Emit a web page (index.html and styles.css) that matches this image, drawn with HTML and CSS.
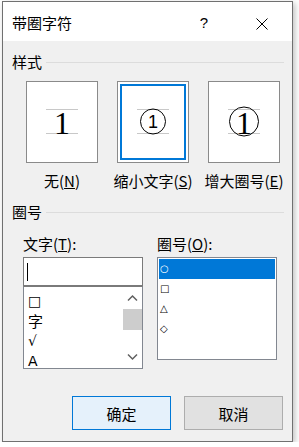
FILE: index.html
```html
<!DOCTYPE html>
<html lang="zh-CN">
  <head>
    <meta charset="UTF-8" />
    <title>带圈字符</title>
    <link rel="stylesheet" href="styles.css">
  </head>
  <body>
    <div class="window">
      <div class="titlebar">
        <span class="title">带圈字符</span>
        <span class="help">?</span>
        <svg class="close" width="12" height="12" viewBox="0 0 12 12">
          <path d="M0.5 0.5 L11.5 11.5 M11.5 0.5 L0.5 11.5" stroke="#000" stroke-width="1" fill="none" />
        </svg>
      </div>

      <div class="content">
        <div class="group-head"><span>样式</span><i class="rule"></i></div>

        <div class="styles">
          <div class="opt">
            <div class="box">
              <svg width="70" height="80" viewBox="0 0 70 80">
                <line x1="19" y1="27.5" x2="51" y2="27.5" class="guide" />
                <line x1="19" y1="51.5" x2="51" y2="51.5" class="guide" />
                <text x="35" y="51.5" class="big-one">1</text>
              </svg>
            </div>
            <span class="opt-label">无(<u>N</u>)</span>
          </div>

          <div class="opt">
            <div class="box picked">
              <div class="focus">
                <svg width="62" height="72" viewBox="4 4 62 72">
                  <line x1="19" y1="27.5" x2="51" y2="27.5" class="guide" />
                  <line x1="19" y1="51.5" x2="51" y2="51.5" class="guide" />
                  <circle cx="35" cy="39.5" r="12.5" class="ring" />
                  <text x="35" y="46" class="small-one">1</text>
                </svg>
              </div>
            </div>
            <span class="opt-label">缩小文字(<u>S</u>)</span>
          </div>

          <div class="opt">
            <div class="box">
              <svg width="70" height="80" viewBox="0 0 70 80">
                <line x1="19" y1="27.5" x2="51" y2="27.5" class="guide" />
                <line x1="19" y1="51.5" x2="51" y2="51.5" class="guide" />
                <circle cx="35" cy="39.5" r="14.5" class="ring" />
                <text x="35" y="51.5" class="big-one">1</text>
              </svg>
            </div>
            <span class="opt-label">增大圈号(<u>E</u>)</span>
          </div>
        </div>

        <div class="group-head second"><span>圈号</span><i class="rule"></i></div>

        <div class="pickers">
          <div class="col">
            <span class="field-label">文字(<u>T</u>):</span>
            <div class="input"><i class="caret"></i></div>
            <div class="textlist">
              <ul class="items">
                <li class="sym">□</li>
                <li>字</li>
                <li class="sym">√</li>
                <li class="sym">A</li>
              </ul>
              <div class="scrollbar">
                <svg class="arrow" width="19" height="22" viewBox="0 0 19 22">
                  <path d="M5 13.5 L9.5 9 L14 13.5" stroke="#606060" stroke-width="1.5" fill="none" />
                </svg>
                <div class="track"><div class="thumb"></div></div>
                <svg class="arrow" width="19" height="22" viewBox="0 0 19 22">
                  <path d="M5 8.5 L9.5 13 L14 8.5" stroke="#606060" stroke-width="1.5" fill="none" />
                </svg>
              </div>
            </div>
          </div>

          <div class="col">
            <span class="field-label">圈号(<u>O</u>):</span>
            <ul class="ringlist">
              <li class="selected">○</li>
              <li>□</li>
              <li>△</li>
              <li>◇</li>
            </ul>
          </div>
        </div>

        <div class="buttons">
          <button class="btn default">确定</button>
          <button class="btn">取消</button>
        </div>
      </div>
    </div>
  </body>
</html>
```

FILE: styles.css
```css
body {
  margin: 0;
  background-color: #fff;
  font-family: "Noto Sans CJK SC", "Noto Sans", sans-serif;
  font-size: 15px;
  color: #000;
}
.window {
  margin: 1px 0 0 2px;
  width: 289px;
  height: 439px;
  border: 1px solid #707070;
  background-color: #f0f0f0;
  box-shadow: 2px 2px 6px rgba(0, 0, 0, 0.25);
  display: flex;
  flex-direction: column;
}
.titlebar {
  height: 39px;
  background-color: #fff;
  display: flex;
  align-items: center;
  padding-left: 9px;
}
.title {
  flex: 1;
  line-height: 20px;
  margin-top: 3px;
}
.help {
  font-family: "Liberation Sans", sans-serif;
  font-size: 15px;
  margin-top: 2px;
  margin-right: 48px;
}
.close {
  margin-right: 24px;
  margin-top: 4px;
}
.content {
  padding: 11px 8px 0 9px;
}
.group-head {
  display: flex;
  align-items: center;
  height: 20px;
  line-height: 20px;
}
.group-head.second {
  margin-top: 11px;
}
.rule {
  flex: 1;
  height: 1px;
  background-color: #dcdcdc;
  margin-left: 4px;
}
.styles {
  display: flex;
  gap: 19px;
  padding-left: 14px;
  margin-top: 9px;
}
.opt {
  width: 72px;
  display: flex;
  flex-direction: column;
  align-items: center;
  gap: 8px;
}
.opt-label {
  white-space: nowrap;
  line-height: 20px;
}
.box {
  width: 72px;
  height: 82px;
  box-sizing: border-box;
  border: 1px solid #8a8a8a;
  background-color: #fff;
}
.box svg {
  display: block;
}
.box.picked {
  padding: 2px;
}
.focus {
  height: 100%;
  box-sizing: border-box;
  border: 2px solid #0078d7;
}
.guide {
  stroke: #c8c8c8;
  stroke-width: 1;
}
.ring {
  fill: none;
  stroke: #000;
  stroke-width: 1;
}
.big-one {
  font-family: "Liberation Serif", serif;
  font-size: 32px;
  text-anchor: middle;
}
.small-one {
  font-family: "Liberation Sans", sans-serif;
  font-size: 18px;
  text-anchor: middle;
}
.pickers {
  display: flex;
  gap: 14px;
  padding-left: 11px;
  margin-top: 12px;
}
.col {
  width: 120px;
  display: flex;
  flex-direction: column;
}
.field-label {
  line-height: 20px;
  margin-bottom: 3px;
  white-space: nowrap;
}
.input {
  height: 29px;
  box-sizing: border-box;
  border: 1px solid #7a7a7a;
  background-color: #fff;
  padding: 5px 0 0 3px;
}
.caret {
  display: block;
  width: 1px;
  height: 18px;
  background-color: #000;
}
.textlist {
  height: 83px;
  box-sizing: border-box;
  border: 1px solid #828790;
  border-top-color: #7a7a7a;
  background-color: #fff;
  display: flex;
  overflow: hidden;
}
.items {
  list-style: none;
  margin: 0;
  padding: 4px 0 0 4px;
  flex: 1;
}
.items li {
  height: 20px;
  line-height: 20px;
}
.items .sym {
  font-family: "DejaVu Sans", sans-serif;
  font-size: 14px;
}
.scrollbar {
  width: 19px;
  display: flex;
  flex-direction: column;
}
.arrow {
  display: block;
}
.track {
  flex: 1;
  padding-top: 0;
}
.thumb {
  height: 21px;
  background-color: #cdcdcd;
}
.ringlist {
  list-style: none;
  margin: 0;
  height: 103px;
  box-sizing: border-box;
  border: 1px solid #828790;
  background-color: #fff;
  padding: 1px;
  font-family: "DejaVu Sans", sans-serif;
  font-size: 10px;
}
.ringlist li {
  height: 20px;
  line-height: 20px;
  padding-left: 1px;
}
.ringlist li.selected {
  background-color: #0078d7;
  color: #fff;
}
.buttons {
  display: flex;
  justify-content: flex-end;
  gap: 13px;
  margin-top: 27px;
  padding-right: 1px;
}
.btn {
  width: 99px;
  height: 34px;
  font-family: "Noto Sans CJK SC", sans-serif;
  font-size: 15px;
  color: #000;
  border: 1px solid #adadad;
  background-color: #e1e1e1;
  padding: 0;
}
.btn.default {
  border-color: #0078d7;
  background-color: #e5f1fb;
}
```
